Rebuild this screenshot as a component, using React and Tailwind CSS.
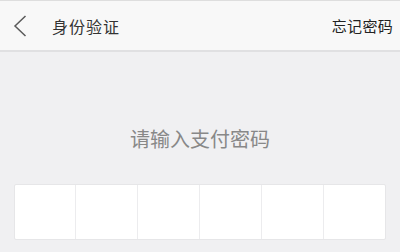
import React from "react";

export default function App() {
  const cells = [0, 1, 2, 3, 4, 5];
  return (
    <div
      className="w-[400px] h-[252px] overflow-hidden bg-[#f0f0f2] flex flex-col"
      style={{ fontFamily: '"Noto Sans CJK SC", "Noto Sans", sans-serif' }}
    >
      <div className="h-[52px] shrink-0 bg-[#f8f8f8] border-t border-t-[#dedede] border-b-2 border-b-[#e0e0e2] flex items-center">
        <div className="w-[52px] pl-[13px] flex items-center">
          <svg width="14" height="22" viewBox="0 0 14 22">
            <path d="M12.5 1 L2 11 L12.5 21" fill="none" stroke="#5a5a5a" strokeWidth="1.5" />
          </svg>
        </div>
        <div className="text-[16px] leading-none text-[#333] tracking-[1px]">身份验证</div>
        <div className="ml-auto pr-[7px] text-[15px] leading-none text-[#222] tracking-[0.3px]">忘记密码</div>
      </div>
      <div className="flex-1 flex flex-col items-center">
        <div className="mt-[77px] text-[20px] leading-none text-[#888]">请输入支付密码</div>
        <div className="mt-[35px] ml-[-1px] w-[372px] h-[56px] bg-white border border-[#e6e6e8] rounded-[2px] flex">
          {cells.map((i) => (
            <div
              key={i}
              className={"flex-1 " + (i < 5 ? "border-r border-r-[#ececee]" : "")}
            />
          ))}
        </div>
      </div>
    </div>
  );
}
